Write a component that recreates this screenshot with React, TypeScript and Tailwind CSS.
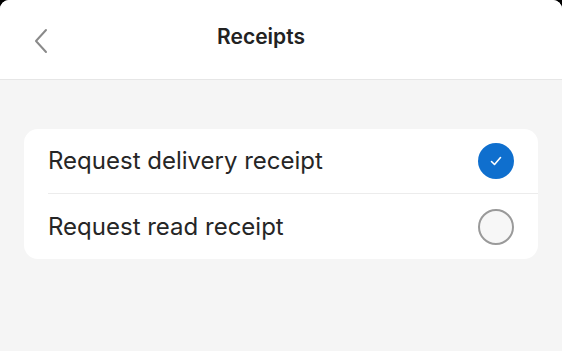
import React, { useState } from 'react';

type Option = { id: string; label: string };

const options: Option[] = [
  { id: 'delivery', label: 'Request delivery receipt' },
  { id: 'read', label: 'Request read receipt' },
];

function Check({ on }: { on: boolean }) {
  if (on) {
    return (
      <div className="flex h-[36px] w-[36px] items-center justify-center rounded-full bg-[#0f6fce]">
        <svg width="14" height="14" viewBox="0 0 14 14" fill="none">
          <path d="M2.5 7.5 L5.5 10.5 L11.5 3.5" stroke="#ffffff" strokeWidth="1.6" strokeLinecap="round" strokeLinejoin="round" />
        </svg>
      </div>
    );
  }
  return <div className="h-[36px] w-[36px] rounded-full border-2 border-[#9a9a9a] bg-[#f7f7f7]" />;
}

export default function App() {
  const [checked, setChecked] = useState<Record<string, boolean>>({ delivery: true, read: false });

  return (
    <div className="h-[351px] w-[562px] overflow-hidden bg-black" style={{ fontFamily: 'Inter, "Noto Sans", sans-serif' }}>
      <div className="flex h-full flex-col overflow-hidden rounded-t-[9px] bg-[#f5f5f5]">
        {/* header */}
        <div className="relative flex h-[80px] items-center justify-center border-b border-[#e6e6e6] bg-white pr-[40px]">
          <button className="absolute left-[30px] top-[24px] p-1">
            <svg width="14" height="26" viewBox="0 0 14 26" fill="none">
              <path d="M12 2 L2 13 L12 24" stroke="#8a8a8a" strokeWidth="2" strokeLinecap="round" strokeLinejoin="round" />
            </svg>
          </button>
          <h1 className="mt-[-5px] text-[21px] font-semibold text-[#222]">Receipts</h1>
        </div>

        {/* list */}
        <div className="px-[24px] pt-[49px]">
          <div className="rounded-[14px] bg-white">
            {options.map((o, i) => (
              <div
                key={o.id}
                onClick={() => setChecked((c) => ({ ...c, [o.id]: !c[o.id] }))}
                className={`ml-[24px] flex h-[65px] items-center justify-between pr-[24px] ${i === 0 ? 'border-b border-[#ececec]' : ''}`}
              >
                <span className="text-[24px] text-[#262626]">{o.label}</span>
                <Check on={!!checked[o.id]} />
              </div>
            ))}
          </div>
        </div>
      </div>
    </div>
  );
}
